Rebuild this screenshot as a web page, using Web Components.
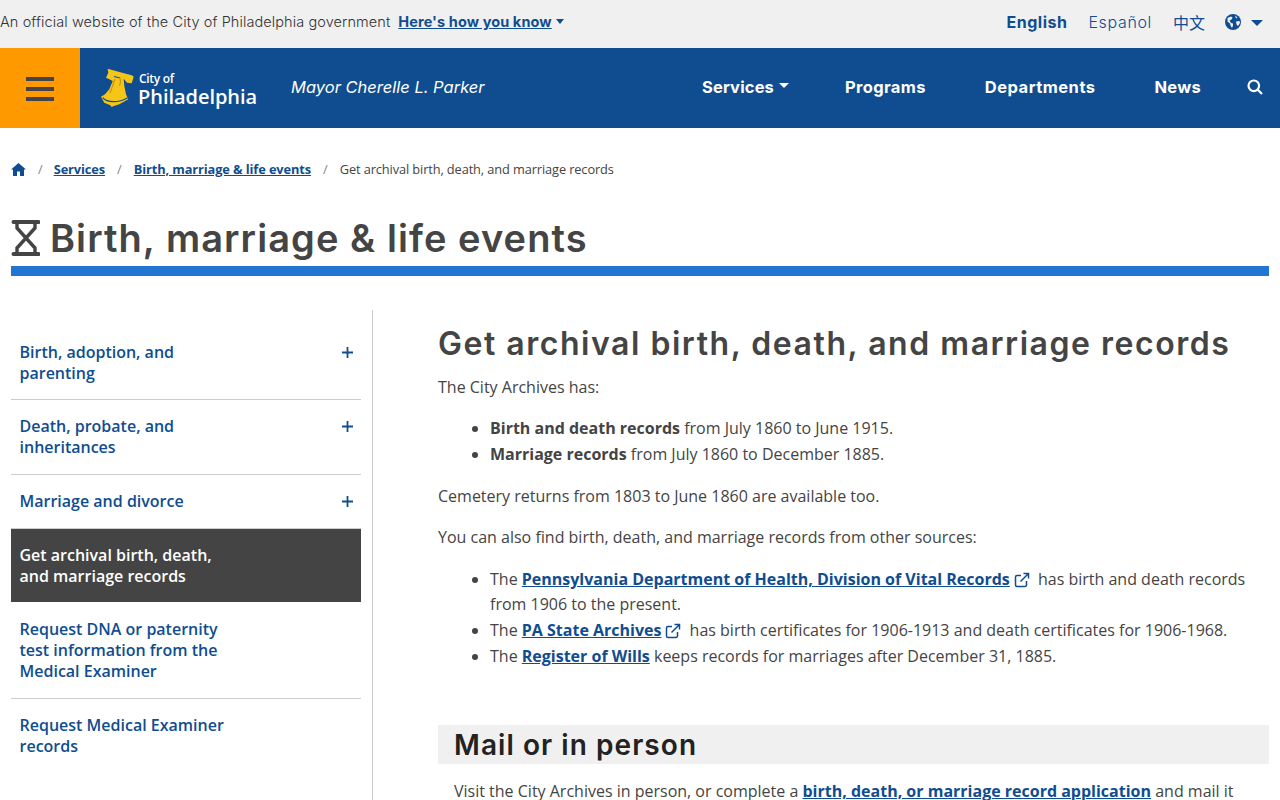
<!DOCTYPE html>
<html lang="en">
<head>
<meta charset="utf-8">
<title>Get archival birth, death, and marriage records</title>
<style>
	html, body { margin: 0; height: 800px; overflow: hidden; background: #fff; }
	body { font-family: "Open Sans", "Liberation Sans", sans-serif; color: #444; }
</style>
</head>
<body>
<gov-banner></gov-banner>
<site-nav></site-nav>
<bread-crumbs current="Get archival birth, death, and marriage records">
	<a href="#">Services</a>
	<a href="#">Birth, marriage &amp; life events</a>
</bread-crumbs>
<page-title>Birth, marriage &amp; life events</page-title>
<page-layout>
	<side-menu slot="side">
		<side-item expand>Birth, adoption, and<br>parenting</side-item>
		<side-item expand>Death, probate, and<br>inheritances</side-item>
		<side-item expand>Marriage and divorce</side-item>
		<side-item active>Get archival birth, death,<br>and marriage records</side-item>
		<side-item>Request DNA or paternity<br>test information from the<br>Medical Examiner</side-item>
		<side-item last>Request Medical Examiner<br>records</side-item>
	</side-menu>
	<records-article></records-article>
</page-layout>

<script>
const DISPLAY_FONT = '"Inter", "Liberation Sans", sans-serif';
const BODY_FONT = '"Open Sans", "Liberation Sans", sans-serif';

const EXTERNAL_ICON = `<svg class="ext" width="16" height="16" viewBox="0 0 16 16" fill="none" stroke="#0f4d90" stroke-width="1.5"><path d="M12.5 9v4a1.5 1.5 0 0 1-1.5 1.5H3A1.5 1.5 0 0 1 1.5 13V5A1.5 1.5 0 0 1 3 3.5h4"/><path d="M9.5 1.5h5v5M14.5 1.5L6.5 9.5"/></svg>`;

class GovBanner extends HTMLElement {
	constructor() {
		super();
		this.attachShadow({ mode: 'open' });
		this.shadowRoot.innerHTML = `
		<style>
			:host { display: flex; align-items: center; box-sizing: border-box; height: 48px; padding-bottom: 6px; background: #f0f0f0; font-family: ${DISPLAY_FONT}; }
			.msg { font-size: 14.5px; font-weight: 300; color: #333; letter-spacing: 0.09px; margin-right: 8px; }
			.how { font-size: 14.5px; font-weight: 700; color: #0f4d90; text-decoration: underline; letter-spacing: 0.1px; }
			.caret { width: 0; height: 0; border: 4.5px solid transparent; border-top: 5px solid #0f4d90; border-bottom: 0; margin-left: 4px; }
			.langs { margin-left: auto; margin-top: 2px; display: flex; align-items: center; color: #0f4d90; font-size: 16px; padding-right: 17px; }
			.langs span { margin-right: 21px; font-weight: 300; letter-spacing: 0.65px; }
			.langs .on { font-weight: 700; letter-spacing: 0.5px; }
			.langs .zh { font-family: "Noto Sans CJK SC", sans-serif; font-weight: 400; margin-right: 20px; letter-spacing: 0; }
			.langs .caret { margin: 1px 0 0 10px; border-width: 6.5px; border-top-width: 6px; border-bottom: 0; }
		</style>
		<span class="msg">An official website of the City of Philadelphia government</span>
		<span class="how">Here's how you know</span><span class="caret"></span>
		<div class="langs">
			<span class="on">English</span>
			<span>Español</span>
			<span class="zh">中文</span>
			<svg width="16" height="16" viewBox="0 0 16 16"><circle cx="8" cy="8" r="8" fill="#0f4d90"/><path d="M2.5 4L6 2.5l1.5 1-1 2-2 1 1.5 2.5 2 .5v2l-1 2.5-1.5-2.5-.5-2-2.5-2zM10 1.5l2.5 2-1.5 1zM11 7.5l3.5-.5.5 2-2 3-1.5-1.500z" fill="#f0f0f0"/></svg>
			<span class="caret"></span>
		</div>
		`;
	}
}
customElements.define('gov-banner', GovBanner);

class SiteNav extends HTMLElement {
	constructor() {
		super();
		this.attachShadow({ mode: 'open' });
		this.shadowRoot.innerHTML = `
		<style>
			:host { display: flex; align-items: center; height: 80px; background: #0f4d90; color: #fff; font-family: ${DISPLAY_FONT}; }
			.burger { box-sizing: border-box; width: 80px; height: 80px; padding-top: 2px; background: #ff9900; display: flex; flex-direction: column; justify-content: center; align-items: center; gap: 6px; }
			.burger i { display: block; width: 28px; height: 4px; background: #444; }
			.logo { display: flex; align-items: center; margin-left: 19px; width: 161px; }
			.logo svg { flex: none; }
			.words { margin-left: 2px; font-family: ${BODY_FONT}; padding-top: 5px; }
			.city { font-size: 12px; line-height: 13px; font-weight: 600; letter-spacing: -0.3px; margin-left: 1px; }
			.phila { font-size: 20px; line-height: 24px; font-weight: 600; letter-spacing: -0.05px; }
			.mayor { font-style: italic; font-size: 16.5px; margin: 0 0 3px 31px; }
			ul { list-style: none; display: flex; align-items: center; margin: 0 0 2px auto; padding: 0 17px 0 0; font-weight: 700; font-size: 16.5px; letter-spacing: 0.25px; }
			li { margin-left: 59px; }
			li:first-child { display: flex; align-items: center; margin-left: 0; letter-spacing: 0.15px; }
			li:nth-child(2) { margin-left: 56px; letter-spacing: 0.35px; }
			li:nth-child(3) { letter-spacing: 0.5px; }
			.caret { width: 0; height: 0; border: 5px solid transparent; border-top: 5px solid #fff; border-bottom: 0; margin: -3px 0 0 5px; }
			svg.search { display: block; margin-left: 46px; }
		</style>
		<div class="burger"><i></i><i></i><i></i></div>
		<div class="logo">
			<svg width="37" height="42" viewBox="0 0 37 42">
				<path d="M8.7 1.7L20.3 5 32.7 8.3 34.7 9.7 32.7 16.3 28 15.7 24.7 11.7 25.3 19 27 27.3 29.3 32.3 20.3 37.3 14.7 39 12.7 40 11.3 38.3 5.3 35.700 2 29.700 6 27.300 10.300 22.300 13.700 14 10.300 12.300 7 10.700 9.300 5.700z" fill="#f5c518"/>
				<path d="M3.700 30.700C8 36 20 36 28.700 30.700" fill="none" stroke="#0f4d90" stroke-width="1.3"/>
				<path d="M15 9.500l6 1.500" fill="none" stroke="#0f4d90" stroke-width="1.2"/>
				<path d="M16 12c-1.500 4-3 9-5 14M21 11c1 3 .5 6-.5 8" fill="none" stroke="#c9960f" stroke-width="1.2"/>
			</svg>
			<div class="words"><div class="city">City of</div><div class="phila">Philadelphia</div></div>
		</div>
		<span class="mayor">Mayor Cherelle L. Parker</span>
		<ul>
			<li>Services<span class="caret"></span></li>
			<li>Programs</li>
			<li>Departments</li>
			<li>News</li>
			<svg class="search" width="16" height="16" viewBox="0 0 16 16" fill="none" stroke="#fff" stroke-width="2.2"><circle cx="6.8" cy="6.8" r="5.3"/><path d="M10.8 10.8L15 15"/></svg>
		</ul>
		`;
	}
}
customElements.define('site-nav', SiteNav);

class BreadCrumbs extends HTMLElement {
	constructor() {
		super();
		this.attachShadow({ mode: 'open' });
		const links = [...this.querySelectorAll('a')].map(a => `<span class="sep">/</span><a href="#">${a.innerHTML}</a>`).join('');
		this.shadowRoot.innerHTML = `
		<style>
			:host { display: flex; align-items: center; height: 18px; margin: 32px 0 0 0; padding-left: 11px; font-size: 12.8px; color: #444; font-family: ${BODY_FONT}; }
			a { color: #0f4d90; font-weight: 700; letter-spacing: -0.1px; }
			.sep { color: #888; margin: 0 12px 0 12px; }
			.sep:first-of-type { margin-right: 11px; }
			.cur { letter-spacing: -0.11px; }
		</style>
		<svg width="15" height="13" viewBox="0 0 15 13"><path d="M7.5 0L15 6.5h-2V13H9V8.5H6V13H2V6.5H0z" fill="#0f4d90"/></svg>
		${links}
		<span class="sep">/</span><span class="cur">${this.getAttribute('current')}</span>
		`;
	}
}
customElements.define('bread-crumbs', BreadCrumbs);

class PageTitle extends HTMLElement {
	constructor() {
		super();
		this.attachShadow({ mode: 'open' });
		this.shadowRoot.innerHTML = `
		<style>
			:host { display: block; margin: 40px 11px 0; border-bottom: 10px solid #2176d2; font-family: ${DISPLAY_FONT}; }
			h1 { display: flex; align-items: center; box-sizing: border-box; margin: 0; height: 48px; padding-bottom: 8px; font-size: 38px; font-weight: 600; color: #444; letter-spacing: 1.07px; }
			svg { margin-right: 10px; }
		</style>
		<h1>
			<svg width="29" height="38" viewBox="0 0 29 38" fill="none" stroke="#444" stroke-width="3.4"><path d="M2.500 3h25M2.500 35h25" stroke-width="4" stroke-linecap="round"/><path d="M6 4v5l18 20v5M24 4v5L6 29v5"/></svg>
			<slot></slot>
		</h1>
		`;
	}
}
customElements.define('page-title', PageTitle);

class PageLayout extends HTMLElement {
	constructor() {
		super();
		this.attachShadow({ mode: 'open' });
		this.shadowRoot.innerHTML = `
		<style>
			:host { display: grid; grid-template-columns: 362px 1fr; margin: 34px 11px 0; column-gap: 65px; }
			.side { border-right: 1px solid #ccc; padding-right: 11px; padding-top: 16px; }
		</style>
		<div class="side"><slot name="side"></slot></div>
		<div><slot></slot></div>
		`;
	}
}
customElements.define('page-layout', PageLayout);

class SideMenu extends HTMLElement {
	constructor() {
		super();
		this.attachShadow({ mode: 'open' });
		this.shadowRoot.innerHTML = `
		<style>
			:host { display: block; }
		</style>
		<slot></slot>
		`;
	}
}
customElements.define('side-menu', SideMenu);

class SideItem extends HTMLElement {
	constructor() {
		super();
		this.attachShadow({ mode: 'open' });
		this.shadowRoot.innerHTML = `
		<style>
			:host { display: flex; justify-content: space-between; padding: 16px 8px 16px 8.5px; border-bottom: 1px solid #ccc; color: #0f4d90; font-size: 16px; font-weight: 600; line-height: 21px; font-family: ${BODY_FONT}; }
			:host(:first-child) { padding-bottom: 15px; }
			:host([active]) { background: #444; color: #fff; padding-bottom: 15px; background-clip: padding-box; border-bottom-color: #fff; }
			:host([last]) { border-bottom: 0; }
			svg { margin-top: 5px; }
		</style>
		<div><slot></slot></div>
		${this.hasAttribute('expand') ? '<svg width="11" height="11" viewBox="0 0 11 11" stroke="#0f4d90" stroke-width="1.8"><path d="M5.5 0v11M0 5.5h11"/></svg>' : ''}
		`;
	}
}
customElements.define('side-item', SideItem);

class RecordsArticle extends HTMLElement {
	constructor() {
		super();
		this.attachShadow({ mode: 'open' });
		this.shadowRoot.innerHTML = `
		<style>
			:host { display: block; font-family: ${BODY_FONT}; font-size: 16px; line-height: 25.6px; color: #444; }
			h2 { font-family: ${DISPLAY_FONT}; font-size: 32px; line-height: 40px; font-weight: 600; letter-spacing: 1.53px; margin: 14px 0 10.9px; color: #444; }
			p { margin: 0 0 16px; }
			ul { margin: 0 0 16px; padding-left: 52px; }
			a { color: #0f4d90; font-weight: 700; }
			.ext { vertical-align: -3px; margin: 0 4px 0 4px; }
			h3 { box-sizing: border-box; height: 39px; padding: 1px 0 0 16px; font-family: ${DISPLAY_FONT}; font-size: 28px; line-height: 38px; font-weight: 600; letter-spacing: 1.06px; color: #222; background: #f0f0f0; margin: 55.7px 0 15px; }
			.in { padding-left: 16px; }
		</style>
		<h2>Get archival birth, death, and marriage records</h2>
		<p>The City Archives has:</p>
		<ul>
			<li><b>Birth and death records</b> from July 1860 to June 1915.</li>
			<li><b>Marriage records</b> from July 1860 to December 1885.</li>
		</ul>
		<p>Cemetery returns from 1803 to June 1860 are available too.</p>
		<p>You can also find birth, death, and marriage records from other sources:</p>
		<ul>
			<li>The <a href="#">Pennsylvania Department of Health, Division of Vital Records</a>${EXTERNAL_ICON} has birth and death records from 1906 to the present.</li>
			<li>The <a href="#">PA State Archives</a>${EXTERNAL_ICON} has birth certificates for 1906-1913 and death certificates for 1906-1968.</li>
			<li>The <a href="#">Register of Wills</a> keeps records for marriages after December 31, 1885.</li>
		</ul>
		<h3>Mail or in person</h3>
		<p class="in">Visit the City Archives in person, or complete a <a href="#">birth, death, or marriage record application</a> and mail it</p>
		`;
	}
}
customElements.define('records-article', RecordsArticle);
</script>
</body>
</html>
